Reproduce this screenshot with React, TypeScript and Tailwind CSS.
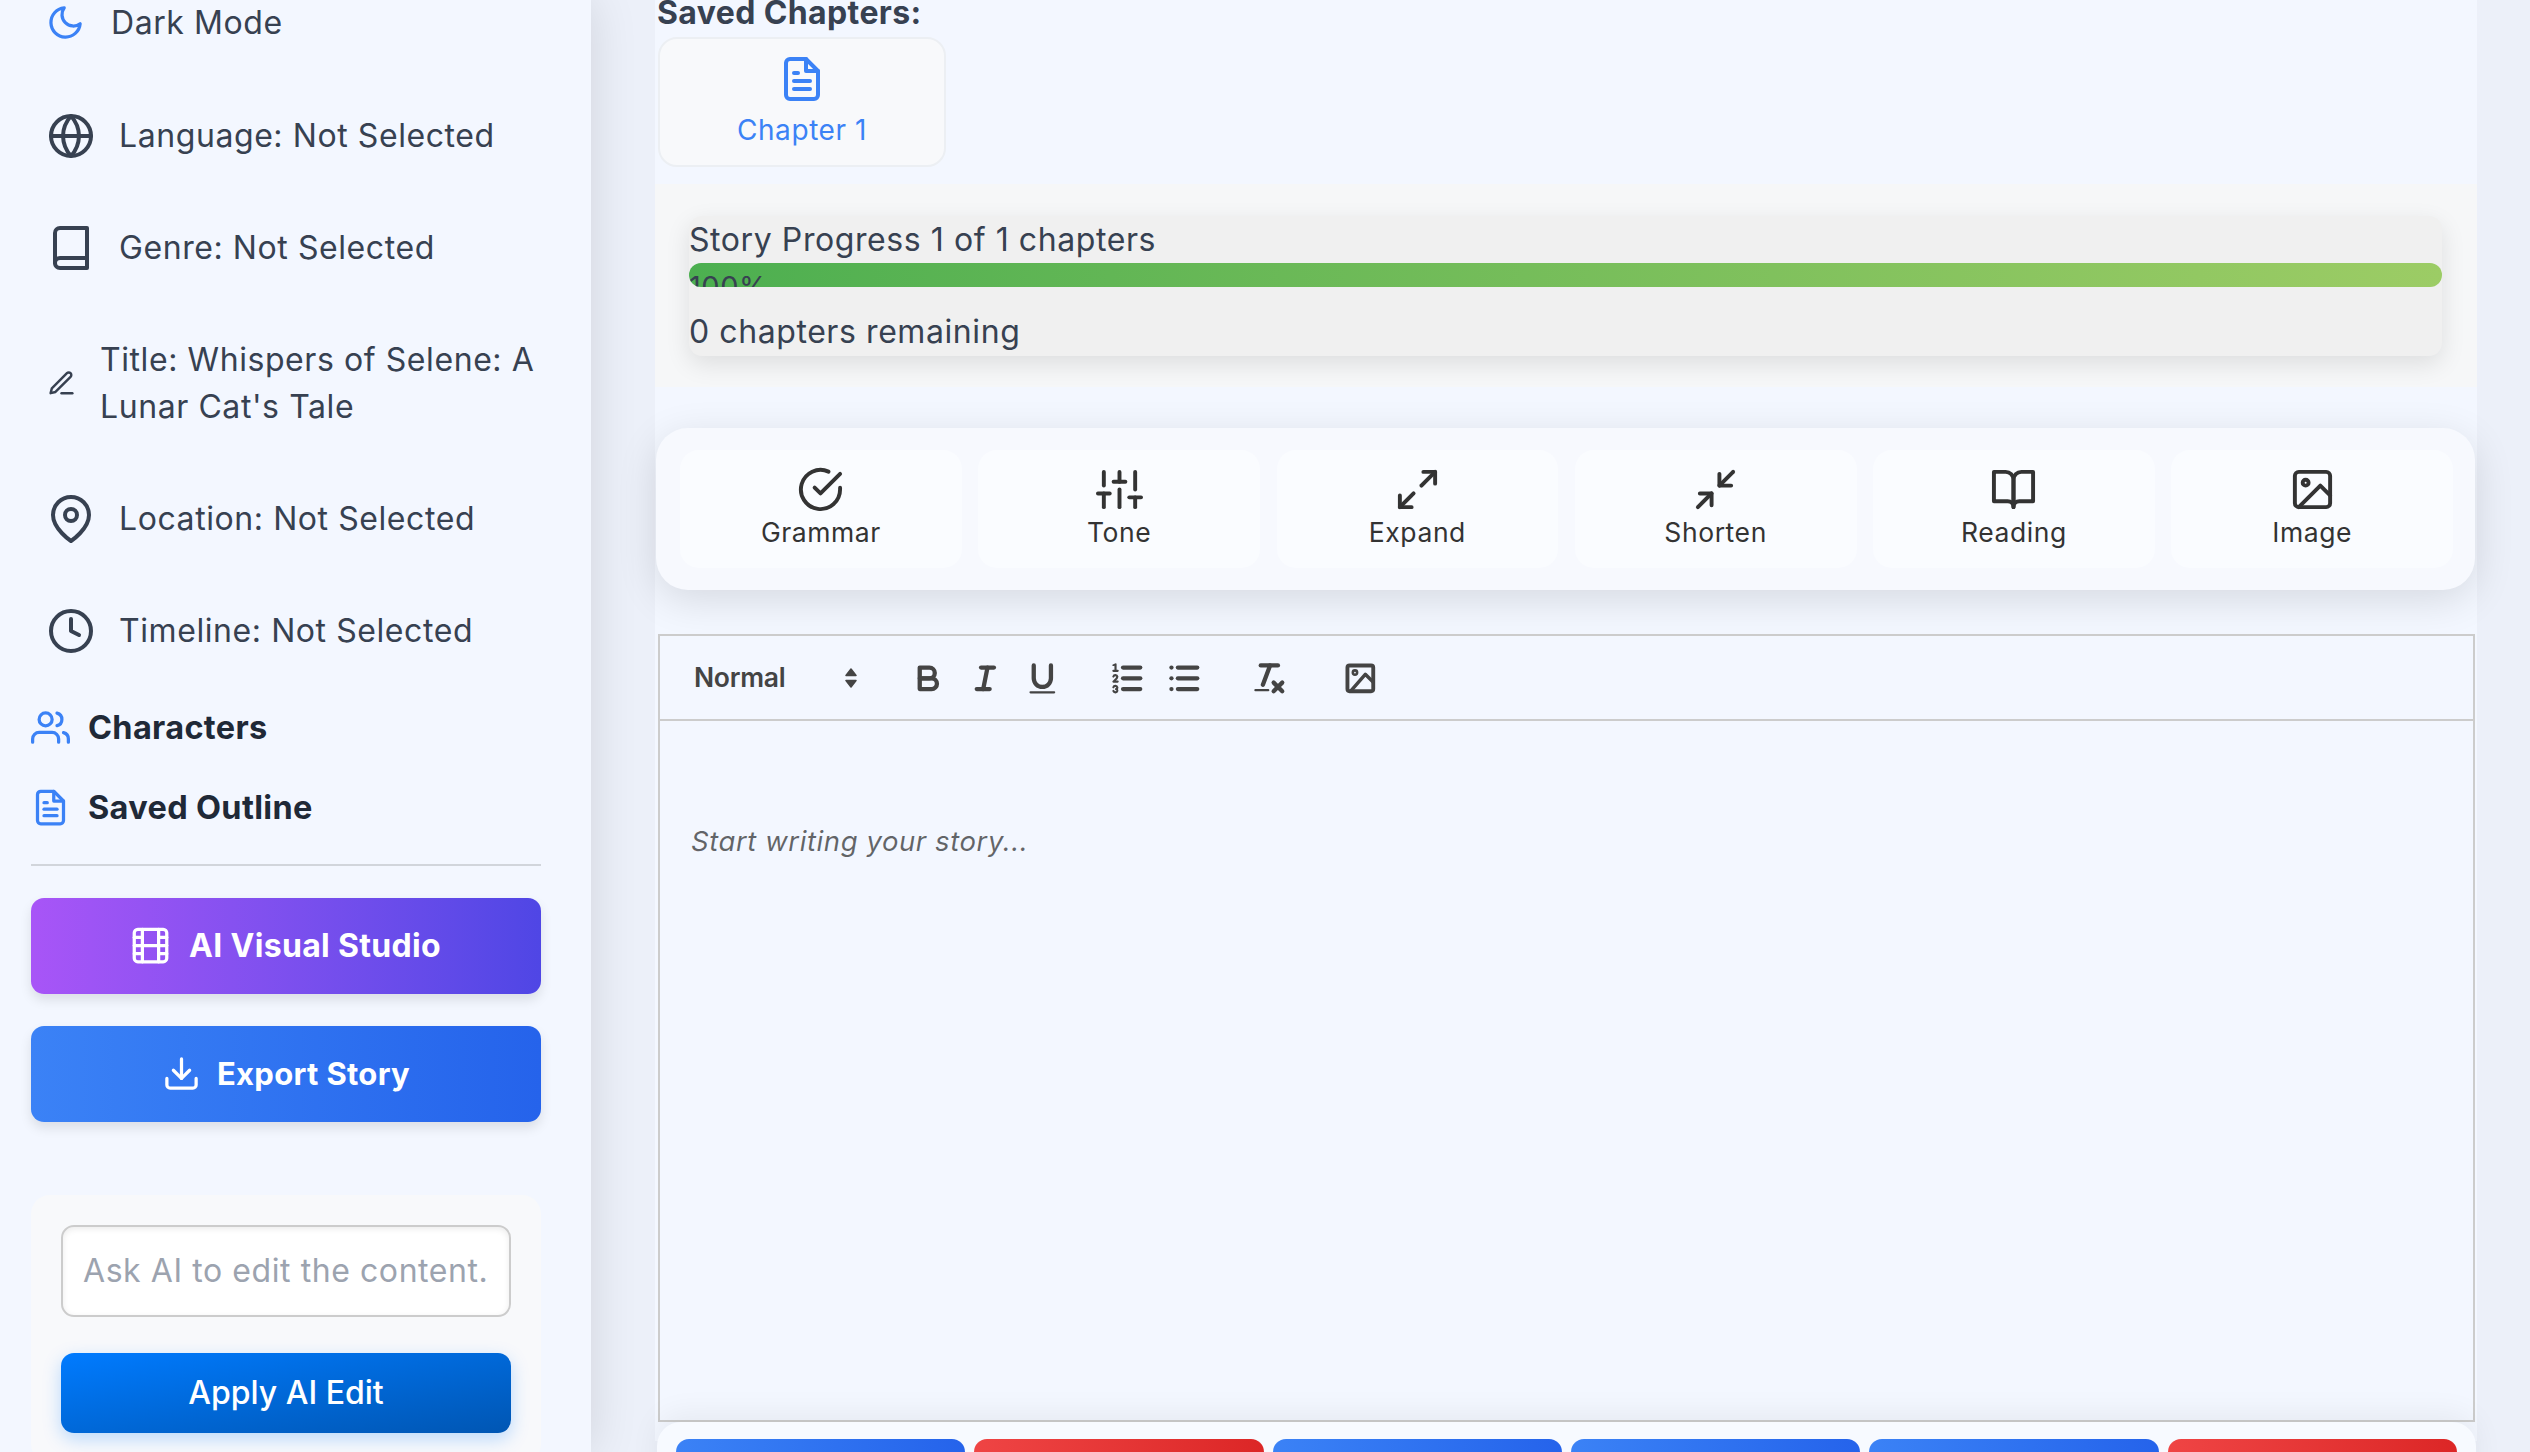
import { ReactNode } from "react";
import {
  FiBook,
  FiBookOpen,
  FiCheckCircle,
  FiClock,
  FiDownload,
  FiEdit3,
  FiFileText,
  FiFilm,
  FiGlobe,
  FiImage,
  FiMapPin,
  FiMaximize2,
  FiMinimize2,
  FiMoon,
  FiSliders,
  FiUsers,
} from "react-icons/fi";

const tools = [
  { label: "Grammar", icon: FiCheckCircle },
  { label: "Tone", icon: FiSliders },
  { label: "Expand", icon: FiMaximize2 },
  { label: "Shorten", icon: FiMinimize2 },
  { label: "Reading", icon: FiBookOpen },
  { label: "Image", icon: FiImage },
];

const bottomButtons = [
  "from-[#3b82f6] to-[#2563eb]",
  "from-[#ef4444] to-[#dc2626]",
  "from-[#3b82f6] to-[#2563eb]",
  "from-[#3b82f6] to-[#2563eb]",
  "from-[#3b82f6] to-[#2563eb]",
  "from-[#ef4444] to-[#dc2626]",
];

function InfoRow({ icon, children }: { icon: ReactNode; children: ReactNode }) {
  return (
    <div className="flex items-center gap-[24px] py-[32px] pl-[47px] pr-[20px] text-[#374151]">
      {icon}
      <span>{children}</span>
    </div>
  );
}

function QlButton({ children }: { children: ReactNode }) {
  return (
    <div className="flex w-[57px] items-center justify-center">
      <svg viewBox="0 0 18 18" className="h-[38.7px] w-[38.7px] fill-none stroke-[#444] stroke-2 [stroke-linecap:round] [stroke-linejoin:round]">
        {children}
      </svg>
    </div>
  );
}

function EditorToolbar() {
  return (
    <div className="flex h-[85px] items-center border-b-2 border-[#ccc] pl-[34px] pt-[2px]">
      <div className="mr-[43px] flex w-[163px] items-center justify-between">
        <span className="text-[26.5px] font-semibold tracking-[-0.01em] text-[#444]">Normal</span>
        <svg viewBox="0 0 12 20" className="h-[20px] w-[12px] fill-[#444] stroke-[#444] [stroke-linejoin:round]">
          <path d="M6 1 11 7.5 1 7.5Z M6 19 1 12.5 11 12.5Z" strokeWidth="1.5" />
        </svg>
      </div>
      <QlButton>
        <path d="M5,4H9.5A2.5,2.5,0,0,1,12,6.5v0A2.5,2.5,0,0,1,9.5,9H5A0,0,0,0,1,5,9V4A0,0,0,0,1,5,4Z" />
        <path d="M5,9h5.5A2.5,2.5,0,0,1,13,11.5v0A2.5,2.5,0,0,1,10.5,14H5a0,0,0,0,1,0,0V9A0,0,0,0,1,5,9Z" />
      </QlButton>
      <QlButton>
        <line x1="7" x2="13" y1="4" y2="4" />
        <line x1="5" x2="11" y1="14" y2="14" />
        <line x1="8" x2="10" y1="14" y2="4" />
      </QlButton>
      <QlButton>
        <path d="M5,3V9a4.012,4.012,0,0,0,4,4H9a4.012,4.012,0,0,0,4-4V3" />
        <rect x="3" y="15" width="12" height="1" rx="0.5" className="fill-[#444] stroke-0" />
      </QlButton>
      <div className="w-[28px]" />
      <QlButton>
        <line x1="7" x2="15" y1="4" y2="4" />
        <line x1="7" x2="15" y1="9" y2="9" />
        <line x1="7" x2="15" y1="14" y2="14" />
        <line x1="2.5" x2="4.5" y1="5.5" y2="5.5" className="stroke-1" />
        <path
          d="M3.5,6A0.5,0.5,0,0,1,3,5.5V3.085l-0.276.138A0.5,0.5,0,0,1,2.053,3c-0.124-.247-0.023-0.324.224-0.447l1-.5A0.5,0.5,0,0,1,4,2.5v3A0.5,0.5,0,0,1,3.5,6Z"
          className="fill-[#444] stroke-0"
        />
        <path d="M4.5,10.5h-2c0-.234,1.85-1.076,1.85-2.234A0.959,0.959,0,0,0,2.5,8.156" className="stroke-1" />
        <path
          d="M2.5,14.846a0.959,0.959,0,0,0,1.85-.109A0.7,0.7,0,0,0,3.75,14a0.688,0.688,0,0,0,.6-0.736,0.959,0.959,0,0,0-1.85-.109"
          className="stroke-1"
        />
      </QlButton>
      <QlButton>
        <line x1="6" x2="15" y1="4" y2="4" />
        <line x1="6" x2="15" y1="9" y2="9" />
        <line x1="6" x2="15" y1="14" y2="14" />
        <line x1="3" x2="3" y1="4" y2="4" />
        <line x1="3" x2="3" y1="9" y2="9" />
        <line x1="3" x2="3" y1="14" y2="14" />
      </QlButton>
      <div className="w-[28px]" />
      <QlButton>
        <line x1="5" x2="13" y1="3" y2="3" />
        <line x1="6" x2="9.35" y1="12" y2="3" />
        <line x1="11" x2="15" y1="11" y2="15" />
        <line x1="15" x2="11" y1="11" y2="15" />
        <rect x="2" y="14" width="7" height="1" rx="0.5" className="fill-[#444] stroke-0" />
      </QlButton>
      <div className="w-[34px]" />
      <QlButton>
        <rect x="3" y="3" width="12" height="12" rx="1" className="stroke-[1.8]" />
        <circle cx="6.5" cy="6.3" r="1" className="stroke-[1.2]" />
        <polyline points="4.6 14.8 11.3 7.1 14.7 10.5" className="stroke-[1.6]" />
      </QlButton>
    </div>
  );
}

export default function App() {
  return (
    <div className="flex h-[1452px] w-full overflow-hidden bg-[#ecf0f9] font-['Inter','Liberation_Sans',sans-serif] text-[32px] leading-[47.7px] tracking-[0.018em]">
      {/* Sidebar */}
      <aside className="relative z-10 h-full w-[591px] shrink-0 overflow-hidden bg-[#f3f7ff] shadow-[0_0_45px_rgba(0,0,0,0.12)]">
        <div className="-mt-[33px]">
          <div className="mb-px flex items-center gap-[26px] py-[32px] pl-[46px] text-[#374151]">
            <FiMoon size={39} className="shrink-0 text-[#3b82f6]" />
            <span>Dark Mode</span>
          </div>
          <InfoRow icon={<FiGlobe size={48} className="shrink-0" />}>Language: Not Selected</InfoRow>
          <InfoRow icon={<FiBook size={48} className="shrink-0" />}>Genre: Not Selected</InfoRow>
          <InfoRow icon={<FiEdit3 size={29} className="shrink-0" />}>Title: Whispers of Selene: A Lunar Cat's Tale</InfoRow>
          <InfoRow icon={<FiMapPin size={48} className="shrink-0" />}>Location: Not Selected</InfoRow>
          <InfoRow icon={<FiClock size={48} className="shrink-0" />}>Timeline: Not Selected</InfoRow>
        </div>

        <div className="pl-[31px] pr-[50px]">
          <div className="flex items-center gap-[18px] pb-[15px] pt-[17px] text-[32.5px] font-bold tracking-[0.01em] text-[#1f2937]">
            <FiUsers size={39} className="shrink-0 text-[#3b82f6]" />
            <span>Characters</span>
          </div>
          <div className="flex items-center gap-[18px] pb-[15px] pt-[17px] text-[32.5px] font-bold tracking-[0.01em] text-[#1f2937]">
            <FiFileText size={39} className="shrink-0 text-[#3b82f6]" />
            <span>Saved Outline</span>
          </div>
          <div className="mt-[17px] h-[2px] bg-[#d1d5db]" />

          <button className="mt-[32px] flex h-[96px] w-full items-center justify-center gap-[19px] rounded-[13px] bg-gradient-to-r from-[#a855f7] to-[#4f46e5] text-[32px] font-bold tracking-[0.01em] text-white shadow-[0_6px_12px_rgba(0,0,0,0.1)]">
            <FiFilm size={39} />
            <span>AI Visual Studio</span>
          </button>
          <button className="mt-[32px] flex h-[96px] w-full items-center justify-center gap-[16px] rounded-[13px] bg-gradient-to-r from-[#3b82f6] to-[#2563eb] text-[31px] font-bold tracking-[0.01em] text-white shadow-[0_6px_12px_rgba(0,0,0,0.1)]">
            <FiDownload size={39} />
            <span>Export Story</span>
          </button>

          <div className="mt-[73px] rounded-[19px] bg-[#f8f9fb] px-[30px] pb-[30px] pt-[30px]">
            <input
              readOnly
              placeholder="Ask AI to edit the content..."
              className="h-[92px] w-full rounded-[13px] border-[2.5px] border-[#ccc] bg-white px-[20px] text-[#374151] shadow-[inset_0_2px_6px_rgba(0,0,0,0.08)] outline-none placeholder:text-[#9ca3af]"
            />
            <button className="mt-[36px] h-[80px] w-full rounded-[13px] bg-gradient-to-br from-[#007bff] to-[#0056b3] font-medium tracking-normal text-white shadow-[0_6px_18px_rgba(0,123,255,0.25)]">
              Apply AI Edit
            </button>
          </div>
        </div>
      </aside>

      {/* Main column */}
      <main className="h-full flex-1 overflow-hidden pl-[64px] pr-[53px]">
        <div className="h-full bg-[#f3f7ff]">
          <h2 className="-mt-[11px] pl-[2px] font-bold tracking-[0.012em] text-[#374151]">Saved Chapters:</h2>
          <div className="ml-[3px] flex h-[130px] w-[288px] flex-col items-center justify-center gap-[9px] rounded-[19px] border-2 border-[#eceff3] bg-[#f8f9fb] text-[28px] text-[#3b82f6]">
            <FiFileText size={48} />
            <span className="leading-[36px]">Chapter 1</span>
          </div>

          {/* Story progress */}
          <div className="mt-[17px] h-[203px] bg-[#f6f7f8] pl-[34px] pr-[35px] pt-[32px]">
            <div className="h-[140px] rounded-[13px] bg-[#f0f0f0] text-[#374151] shadow-[0_8px_24px_rgba(0,0,0,0.1)]">
              <p>Story Progress 1 of 1 chapters</p>
              <div className="h-[24px] overflow-hidden rounded-[13px] bg-gradient-to-r from-[#4caf50] to-[#9ccc65]">
                <span className="block text-[29px]">100%</span>
              </div>
              <p className="mt-[21px]">0 chapters remaining</p>
            </div>
          </div>

          {/* AI tools */}
          <div className="ml-px mr-[2px] mt-[41px] grid h-[162px] grid-cols-6 gap-[16.5px] rounded-[32px] bg-[#f7f9fe] py-[22px] pl-[24px] pr-[22px] shadow-[0_10px_40px_rgba(0,0,0,0.12)]">
            {tools.map((tool) => (
              <div key={tool.label} className="flex flex-col items-center justify-center rounded-[19px] bg-[#fafcff] text-[26.5px] text-[#333]">
                <tool.icon size={47} />
                <span className="leading-[38px]">{tool.label}</span>
              </div>
            ))}
          </div>

          {/* Editor */}
          <div className="ml-[3px] mr-[2px] mt-[44px] h-[788px] border-2 border-[#ccc]">
            <EditorToolbar />
            <p className="pl-[31px] pt-[97px] text-[27.5px] italic text-black/60">Start writing your story...</p>
          </div>

          {/* Action buttons, cut off by the page edge */}
          <div className="ml-[2px] mr-px grid h-[60px] grid-cols-6 gap-[9px] rounded-t-[24px] bg-[#f7faff] px-[19px] pt-[17px] shadow-[0_-8px_30px_rgba(0,0,0,0.06)]">
            {bottomButtons.map((colors, i) => (
              <div key={i} className={`h-[60px] rounded-[13px] bg-gradient-to-r ${colors}`} />
            ))}
          </div>
        </div>
      </main>
    </div>
  );
}
